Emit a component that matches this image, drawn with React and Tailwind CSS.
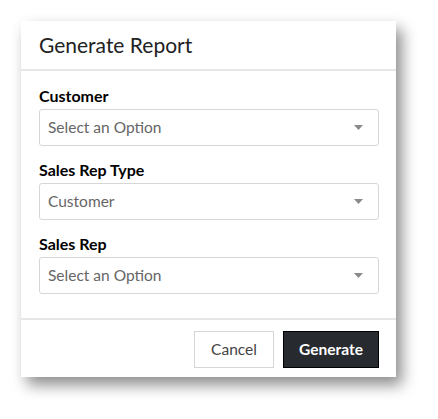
const fields = [
    {label: "Customer", value: "Select an Option"},
    {label: "Sales Rep Type", value: "Customer"},
    {label: "Sales Rep", value: "Select an Option"},
];

const SelectBox = ({value}) => (
    <div className="flex items-center justify-between h-[37px] pl-[8px] pr-[15px] border border-[#d6d6d6] rounded-[3px] bg-white">
        <span className="text-[15.5px] text-[#666]">{value}</span>
        <svg width="9" height="5" viewBox="0 0 9 5">
            <path d="M0 0 L9 0 L4.5 5 Z" fill="#8a8a8a"/>
        </svg>
    </div>
);

const App = () => {
    return (
        <div className="w-[438px] h-[419px] bg-white pt-[21px] pl-[21px]" style={{fontFamily: "Lato, 'Noto Sans', sans-serif"}}>
            <div className="w-[375px] bg-white shadow-[6px_8px_14px_rgba(0,0,0,0.45)]">
                <div className="h-[50px] flex items-center pl-[18px] border-b-2 border-[#e6e6e6]">
                    <h2 className="text-[21px] text-[#222]">Generate Report</h2>
                </div>

                <div className="pt-[15px] pb-[24px] pl-[18px] pr-[17px] flex flex-col gap-[14px]">
                    {fields.map((f) => (
                        <div key={f.label}>
                            <div className="text-[16px] font-bold text-black leading-5 mb-[3px]">{f.label}</div>
                            <SelectBox value={f.value}/>
                        </div>
                    ))}
                </div>

                <div className="border-t-2 border-[#e6e6e6] flex justify-end gap-[9px] pt-[11px] pb-[9px] pr-[17px]">
                    <button className="w-[80px] h-[37px] border border-[#d6d6d6] bg-white text-[15.5px] text-[#444]">
                        Cancel
                    </button>
                    <button className="w-[96px] h-[37px] border border-black bg-[#272b2f] text-[15.5px] font-bold text-white">
                        Generate
                    </button>
                </div>
            </div>
        </div>
    );
};

export default App;
